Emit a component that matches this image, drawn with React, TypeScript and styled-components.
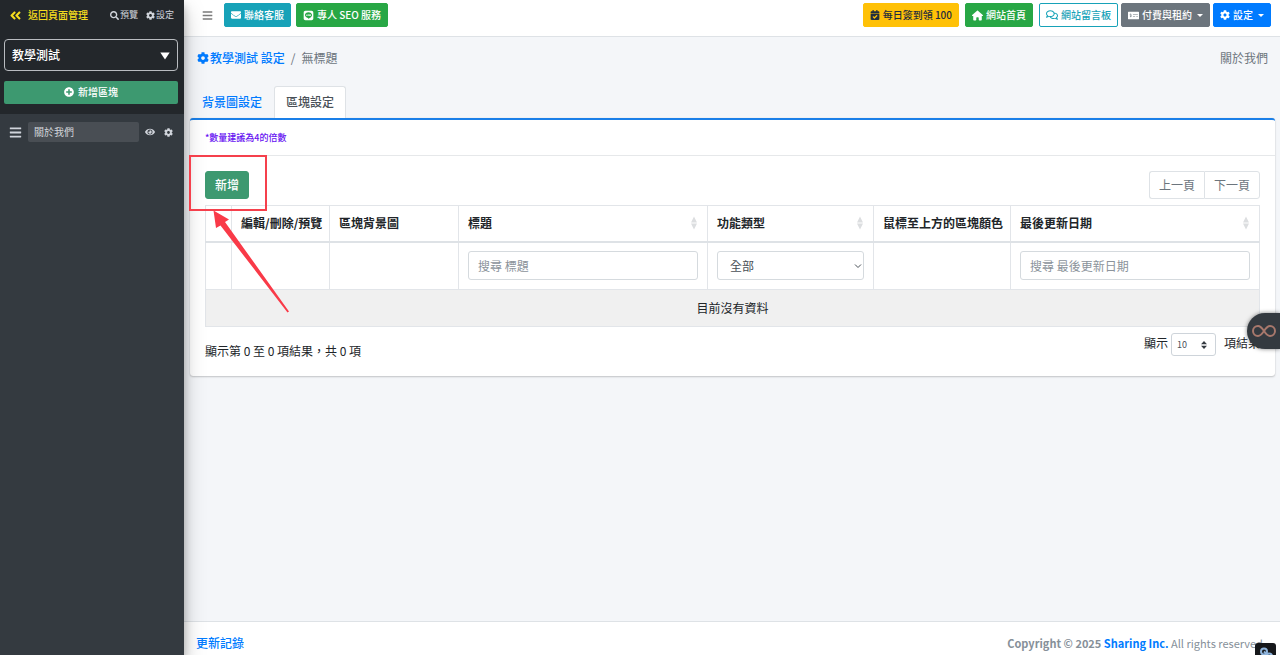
import React from "react";
import styled, { createGlobalStyle, css } from "styled-components";
import {
  FaAngleDoubleLeft,
  FaBars,
  FaCalendarCheck,
  FaCog,
  FaEnvelope,
  FaEye,
  FaLine,
  FaMoneyCheckAlt,
  FaPlusCircle,
  FaRegComments,
  FaSearch,
} from "react-icons/fa";
import { FaHouse } from "react-icons/fa6";

const GlobalStyle = createGlobalStyle`
  *, *::before, *::after { box-sizing: border-box; }
  body {
    margin: 0;
    background: #f4f6f9;
    color: #212529;
    font-family: "Noto Sans CJK TC", "Noto Sans", sans-serif;
    font-size: 12px;
    line-height: 18px;
  }
  button, input, select { font: inherit; color: inherit; margin: 0; }
  button { cursor: pointer; }
  a { color: #007bff; text-decoration: none; }
  svg { display: block; flex: none; }
`;

const Page = styled.div`
  display: flex;
  min-height: 100vh;
`;

/* Sidebar */

const Sidebar = styled.aside`
  position: relative;
  z-index: 2;
  flex: none;
  width: 184px;
  background: #343a40;
  color: #c2c7d0;
  box-shadow: 0 10px 20px rgba(0, 0, 0, 0.25), 0 6px 8px rgba(0, 0, 0, 0.22);
`;

const SidebarTop = styled.div`
  padding: 6px 6px 10px 4px;
  background: #23272b;
`;

const SidebarLinks = styled.nav`
  display: flex;
  align-items: center;
  gap: 8px;
  padding: 0 4px 0 5px;
  margin-bottom: 15px;
`;

const BackLink = styled.a`
  display: flex;
  align-items: center;
  gap: 6px;
  margin-right: auto;
  color: #f5dc1e;
  font-size: 10px;
  font-weight: 500;
`;

const SmallLink = styled.a`
  display: flex;
  align-items: center;
  gap: 1px;
  color: #d0d4db;
  font-size: 9px;
`;

const PageSelectWrap = styled.div`
  position: relative;
  margin-bottom: 10px;
  svg {
    position: absolute;
    right: 8px;
    top: 13px;
    pointer-events: none;
  }
`;

const PageSelect = styled.select`
  display: block;
  width: 100%;
  height: 32px;
  padding: 0 7px;
  appearance: none;
  border: 1px solid #b9bcc0;
  border-radius: 4px;
  background: #23272b;
  color: #fff;
  font-weight: 500;
`;

const AddBlock = styled.button`
  display: flex;
  align-items: center;
  justify-content: center;
  gap: 4px;
  width: 100%;
  height: 23px;
  padding: 0 0 1px;
  border: 0;
  border-radius: 2px;
  background: #3d9970;
  color: #fff;
  font-size: 10px;
  font-weight: 500;
`;

const BlockRow = styled.div`
  display: flex;
  align-items: center;
  gap: 6px;
  padding: 8px 11px 0 9px;
`;

const BlockName = styled.input`
  flex: 1;
  min-width: 0;
  height: 20px;
  padding: 0 6px 1px;
  border: 0;
  border-radius: 2px;
  background: #494e54;
  color: #d3d6db;
  font-size: 10px;
`;

const IconButton = styled.button<{ $tone?: string }>`
  display: flex;
  padding: 0;
  border: 0;
  background: none;
  color: ${(p) => p.$tone ?? "#d0d4db"};
`;

const RowActions = styled.div`
  display: flex;
  align-items: center;
  gap: 9px;
`;

/* Main column */

const Main = styled.div`
  display: flex;
  flex: 1;
  flex-direction: column;
  min-width: 0;
`;

const TopBar = styled.header`
  display: flex;
  align-items: flex-start;
  justify-content: space-between;
  height: 37px;
  padding: 3px 9px 0 18px;
  border-bottom: 1px solid #dee2e6;
  background: #fff;
`;

const BarGroup = styled.div<{ $gap: number }>`
  display: flex;
  align-items: center;
  gap: ${(p) => p.$gap}px;
`;

const MenuSlot = styled.div`
  margin-right: 6px;
`;

const tones = {
  info: ["#17a2b8", "#fff", "#17a2b8"],
  success: ["#28a745", "#fff", "#28a745"],
  warning: ["#ffc107", "#1f2d3d", "#ffc107"],
  outline: ["#fff", "#17a2b8", "#17a2b8"],
  secondary: ["#6c757d", "#fff", "#6c757d"],
  primary: ["#007bff", "#fff", "#007bff"],
};

const BarButton = styled.button<{ $tone: keyof typeof tones }>`
  display: flex;
  align-items: center;
  gap: 3px;
  height: 24px;
  padding: 0 6px;
  border-radius: 2px;
  font-size: 10px;
  font-weight: 500;
  white-space: nowrap;
  ${(p) => css`
    background: ${tones[p.$tone][0]};
    color: ${tones[p.$tone][1]};
    border: 1px solid ${tones[p.$tone][2]};
  `}
`;

const Caret = styled.span`
  margin-left: 2px;
  border: 3px solid transparent;
  border-top-color: currentColor;
  border-bottom: 0;
`;

const Content = styled.main`
  flex: 1;
  padding: 12px 5px 0 6px;
`;

const Crumbs = styled.nav`
  display: flex;
  align-items: center;
  justify-content: space-between;
  padding: 0 7px;
  color: #6c757d;
`;

const CrumbTrail = styled.div`
  display: flex;
  align-items: center;
  gap: 6px;
  a {
    display: flex;
    align-items: center;
    gap: 1px;
    font-weight: 500;
  }
`;

const Tabs = styled.div`
  display: flex;
  margin-top: 19px;
`;

const Tab = styled.button<{ $active?: boolean }>`
  height: 32px;
  padding: 0 11px 2px;
  border: 1px solid ${(p) => (p.$active ? "#dee2e6" : "transparent")};
  border-bottom: 0;
  border-radius: 3px 3px 0 0;
  background: ${(p) => (p.$active ? "#fff" : "none")};
  color: ${(p) => (p.$active ? "#495057" : "#007bff")};
  font-weight: 500;
`;

const Card = styled.section`
  border-top: 2px solid #1a7fe8;
  border-radius: 3px;
  background: #fff;
  box-shadow: 0 0 1px rgba(0, 0, 0, 0.15), 0 1px 2px rgba(0, 0, 0, 0.2);
`;

const CardNote = styled.p`
  margin: 0;
  padding: 9px 15px 8px;
  border-bottom: 1px solid #e6e8ea;
  color: #6610f2;
  font-size: 9px;
  font-weight: 500;
`;

const CardBody = styled.div`
  padding: 15px 15px 16px;
`;

const Toolbar = styled.div`
  position: relative;
  display: flex;
  justify-content: space-between;
  margin-bottom: 6px;
`;

const AddButton = styled.button`
  height: 28px;
  padding: 0 9px;
  border: 1px solid #3d9970;
  border-radius: 3px;
  background: #3d9970;
  color: #fff;
  font-weight: 500;
`;

const Pager = styled.div`
  display: flex;
`;

const PagerButton = styled.button`
  height: 28px;
  padding: 0 9px;
  border: 1px solid #dee2e6;
  background: #fff;
  color: #6c757d;
  &:first-child {
    border-radius: 3px 0 0 3px;
    border-right: 0;
  }
  &:last-child {
    border-radius: 0 3px 3px 0;
  }
`;

const Marker = styled.svg`
  position: absolute;
  left: -17px;
  top: -17px;
  z-index: 3;
  pointer-events: none;
`;

const DataTable = styled.table`
  width: 100%;
  table-layout: fixed;
  border-collapse: collapse;
  border: 1px solid #e2e5e9;
  th {
    height: 36px;
    padding: 0 9px;
    border: 1px solid #e2e5e9;
    border-bottom: 2px solid #dee2e6;
    text-align: left;
    font-weight: 700;
    white-space: nowrap;
  }
  td {
    height: 48px;
    padding: 0 9px;
    border: 1px solid #e2e5e9;
  }
`;

const EmptyRow = styled.tr`
  background: #f0f0f0;
  && td {
    height: 37px;
    text-align: center;
  }
`;

const SortHead = styled.div`
  display: flex;
  align-items: center;
  justify-content: space-between;
`;

const Filter = styled.input`
  display: block;
  width: 100%;
  height: 29px;
  padding: 0 9px;
  border: 1px solid #d5dade;
  border-radius: 3px;
  background: #fff;
  color: #495057;
  &::placeholder {
    color: #8b939b;
    opacity: 1;
  }
`;

const SelectWrap = styled.div`
  position: relative;
  svg {
    position: absolute;
    right: 2px;
    top: 10px;
    pointer-events: none;
  }
`;

const FilterSelect = styled.select`
  display: block;
  width: 100%;
  height: 29px;
  padding: 0 12px;
  appearance: none;
  border: 1px solid #d5dade;
  border-radius: 3px;
  background: #fff;
  color: #495057;
`;

const TableFoot = styled.div`
  display: flex;
  justify-content: space-between;
  padding-top: 6px;
`;

const Info = styled.div`
  padding-top: 9px;
`;

const LengthLabel = styled.label`
  display: flex;
  align-items: flex-start;
  gap: 3px;
  line-height: 20px;
`;

const LengthWrap = styled.span`
  position: relative;
  margin-right: 5px;
  svg {
    position: absolute;
    right: 9px;
    top: 8px;
    pointer-events: none;
  }
`;

const LengthSelect = styled.select`
  display: block;
  width: 45px;
  height: 23px;
  padding: 0 5px;
  appearance: none;
  border: 1px solid #ced4da;
  border-radius: 3px;
  background: #fff;
  color: #495057;
  font-size: 9px;
`;

const Footer = styled.footer`
  display: flex;
  justify-content: space-between;
  padding: 12px 14px 3px 12px;
  border-top: 1px solid #dee2e6;
  background: #fff;
  color: #869099;
  font-size: 11px;
  a {
    font-weight: 500;
  }
  strong a {
    font-weight: 700;
  }
`;

const LogLink = styled.a`
  font-size: 12px;
`;

const SideTab = styled.button`
  position: fixed;
  right: 0;
  bottom: 306px;
  z-index: 4;
  display: flex;
  align-items: center;
  justify-content: center;
  width: 33px;
  height: 36px;
  padding: 0;
  border: 0;
  border-radius: 18px 0 0 18px;
  background: #343a40;
  box-shadow: 0 0 4px rgba(0, 0, 0, 0.5);
`;

const LinkBadge = styled.button`
  position: fixed;
  right: 4px;
  bottom: -8px;
  z-index: 4;
  display: flex;
  justify-content: center;
  width: 21px;
  height: 20px;
  padding: 4px 0 0;
  border: 0;
  border-radius: 3px;
  background: #16181b;
`;

const SortIcon = () => (
  <svg width="8" height="14" viewBox="0 0 8 14" fill="#dcdee0" aria-hidden="true">
    <path d="M4 0.5 7 6.6H1zM4 13.5 1 7.4h6z" />
  </svg>
);

export default function App() {
  return (
    <>
      <GlobalStyle />
      <Page>
        <Sidebar>
          <SidebarTop>
            <SidebarLinks>
              <BackLink href="#pages">
                <FaAngleDoubleLeft size={13} />
                返回頁面管理
              </BackLink>
              <SmallLink href="#preview">
                <FaSearch size={9} />
                預覽
              </SmallLink>
              <SmallLink href="#settings">
                <FaCog size={9} />
                設定
              </SmallLink>
            </SidebarLinks>
            <PageSelectWrap>
              <PageSelect aria-label="頁面">
                <option>教學測試</option>
              </PageSelect>
              <svg width="10" height="8" viewBox="0 0 10 8" fill="#fff" aria-hidden="true">
                <path d="M0.3 0.5h9.4L5 7.6z" />
              </svg>
            </PageSelectWrap>
            <AddBlock>
              <FaPlusCircle size={10} />
              新增區塊
            </AddBlock>
          </SidebarTop>
          <BlockRow>
            <IconButton aria-label="排序">
              <FaBars size={13} />
            </IconButton>
            <BlockName aria-label="區塊名稱" defaultValue="關於我們" />
            <RowActions>
              <IconButton aria-label="顯示區塊">
                <FaEye size={10} />
              </IconButton>
              <IconButton aria-label="區塊設定">
                <FaCog size={9} />
              </IconButton>
            </RowActions>
          </BlockRow>
        </Sidebar>

        <Main>
          <TopBar>
            <BarGroup $gap={5}>
              <MenuSlot>
                <IconButton $tone="#7b7b7b" aria-label="選單">
                  <FaBars size={11} />
                </IconButton>
              </MenuSlot>
              <BarButton $tone="info">
                <FaEnvelope size={10} />
                聯絡客服
              </BarButton>
              <BarButton $tone="success">
                <FaLine size={11} />
                專人 SEO 服務
              </BarButton>
            </BarGroup>
            <BarGroup $gap={3}>
              <BarGroup $gap={6}>
                <BarButton $tone="warning">
                  <FaCalendarCheck size={10} />
                  每日簽到領 100
                </BarButton>
                <BarButton $tone="success">
                  <FaHouse size={11} />
                  網站首頁
                </BarButton>
                <BarButton $tone="outline">
                  <FaRegComments size={12} />
                  網站留言板
                </BarButton>
              </BarGroup>
              <BarButton $tone="secondary">
                <FaMoneyCheckAlt size={11} />
                付費與租約
                <Caret />
              </BarButton>
              <BarButton $tone="primary">
                <FaCog size={10} />
                設定
                <Caret />
              </BarButton>
            </BarGroup>
          </TopBar>

          <Content>
            <Crumbs aria-label="路徑">
              <CrumbTrail>
                <a href="#site">
                  <FaCog size={12} />
                  教學測試 設定
                </a>
                <span>/</span>
                <span>無標題</span>
              </CrumbTrail>
              <span>關於我們</span>
            </Crumbs>

            <Tabs role="tablist">
              <Tab role="tab">背景圖設定</Tab>
              <Tab role="tab" aria-selected="true" $active>
                區塊設定
              </Tab>
            </Tabs>

            <Card>
              <CardNote>*數量建議為4的倍數</CardNote>
              <CardBody>
                <Toolbar>
                  <AddButton>新增</AddButton>
                  <Pager>
                    <PagerButton>上一頁</PagerButton>
                    <PagerButton>下一頁</PagerButton>
                  </Pager>
                  <Marker width="104" height="160" viewBox="0 0 104 160" aria-hidden="true">
                    <rect x="2" y="2" width="76" height="54" fill="none" stroke="#f5404c" strokeWidth="2" />
                    <path
                      d="M25.500 56.500 41 65.500 37 68 101 157.500 99.500 158.500 32.500 71.500 28 74z"
                      fill="#f93a48"
                    />
                  </Marker>
                </Toolbar>

                <DataTable>
                  <colgroup>
                    <col style={{ width: 26 }} />
                    <col style={{ width: 98 }} />
                    <col style={{ width: 129 }} />
                    <col />
                    <col style={{ width: 166 }} />
                    <col style={{ width: 137 }} />
                    <col />
                  </colgroup>
                  <thead>
                    <tr>
                      <th />
                      <th>編輯/刪除/預覽</th>
                      <th>區塊背景圖</th>
                      <th>
                        <SortHead>
                          標題
                          <SortIcon />
                        </SortHead>
                      </th>
                      <th>
                        <SortHead>
                          功能類型
                          <SortIcon />
                        </SortHead>
                      </th>
                      <th>鼠標至上方的區塊顏色</th>
                      <th>
                        <SortHead>
                          最後更新日期
                          <SortIcon />
                        </SortHead>
                      </th>
                    </tr>
                  </thead>
                  <tbody>
                    <tr>
                      <td />
                      <td />
                      <td />
                      <td>
                        <Filter aria-label="標題" placeholder="搜尋 標題" />
                      </td>
                      <td>
                        <SelectWrap>
                          <FilterSelect aria-label="功能類型">
                            <option>全部</option>
                          </FilterSelect>
                          <svg width="8" height="9" viewBox="0 0 8 9" fill="none" stroke="#495057" aria-hidden="true">
                            <path d="M1 3.500 4 6.500 7 3.500" />
                          </svg>
                        </SelectWrap>
                      </td>
                      <td />
                      <td>
                        <Filter aria-label="最後更新日期" placeholder="搜尋 最後更新日期" />
                      </td>
                    </tr>
                    <EmptyRow>
                      <td colSpan={7}>目前沒有資料</td>
                    </EmptyRow>
                  </tbody>
                </DataTable>

                <TableFoot>
                  <Info>顯示第 0 至 0 項結果，共 0 項</Info>
                  <LengthLabel>
                    顯示
                    <LengthWrap>
                      <LengthSelect>
                        <option>10</option>
                      </LengthSelect>
                      <svg width="6" height="8" viewBox="0 0 6 8" fill="#343a40" aria-hidden="true">
                        <path d="M3 0 6 3.300H0zM3 8 0 4.700h6z" />
                      </svg>
                    </LengthWrap>
                    項結果
                  </LengthLabel>
                </TableFoot>
              </CardBody>
            </Card>
          </Content>

          <Footer>
            <LogLink href="#changelog">更新記錄</LogLink>
            <div>
              <strong>
                Copyright © 2025 <a href="#sharing">Sharing Inc.</a>
              </strong>{" "}
              All rights reserved.
            </div>
          </Footer>
        </Main>
      </Page>

      <SideTab aria-label="快捷工具">
        <svg width="24" height="14" viewBox="0 0 24 14" fill="none" stroke="#a8786c" strokeWidth="2" aria-hidden="true">
          <path d="M12 7C10 4 8.500 2 6 2a5 5 0 0 0 0 10c2.500 0 4-2 6-5s3.500-5 6-5a5 5 0 0 1 0 10c-2.500 0-4-2-6-5z" />
        </svg>
      </SideTab>
      <LinkBadge aria-label="連結">
        <svg width="14" height="14" viewBox="0 0 14 14" fill="none" stroke="#8fb4dc" strokeWidth="2" aria-hidden="true">
          <circle cx="5" cy="4.500" r="3" />
          <circle cx="10" cy="9.500" r="3" />
          <path d="M5 4.500 10 9.500" />
        </svg>
      </LinkBadge>
    </>
  );
}
